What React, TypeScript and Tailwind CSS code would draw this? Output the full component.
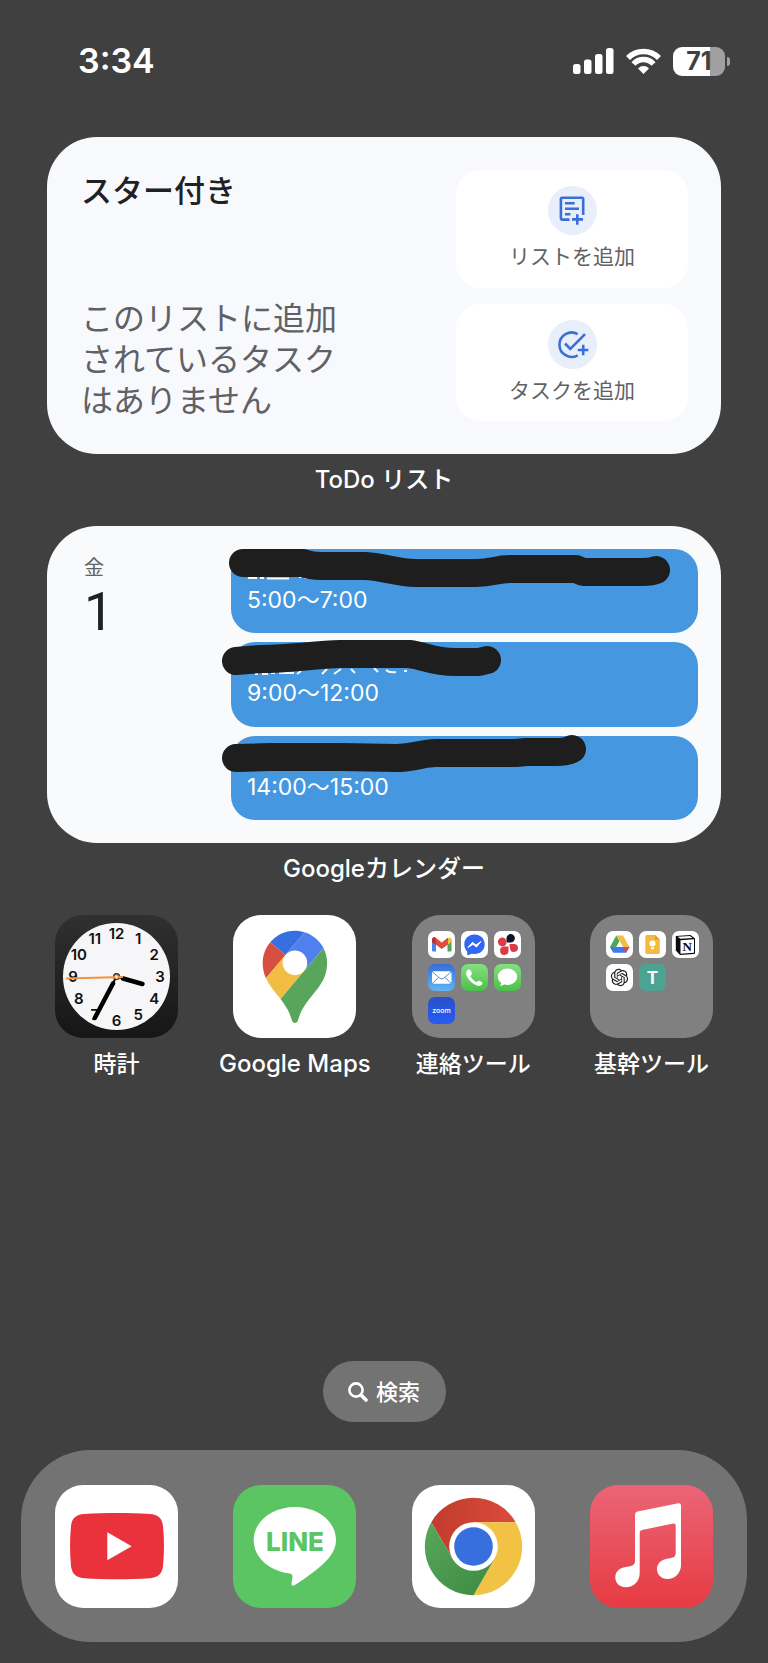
import { ReactNode } from "react";
import { RiOpenaiFill } from "react-icons/ri";

interface EventItem {
    time: string;
    stroke: string;
    marks: string;
}

const events: EventItem[] = [
    {
        time: "5:00～7:00",
        stroke: "M12 14 L72 14 Q80 17 90 17 L134 17 C155 18 165 24 185 24 L245 24 C262 24 265 20 280 20 L345 20 L352 23 L412 23 Q420 23 425 21",
        marks: "M17 29 h9 M29 29 h4 M36 29.5 h22 M68 28 h2 M73 28.5 h3",
    },
    {
        time: "9:00～12:00",
        stroke: "M5 19 L30 17 C60 17 80 13 110 12 L178 12 C195 14 200 20 225 20 L248 20 L256 18",
        marks: "M24 32 h3 M31 32 h6 M40 31 h4 M48 31 h15 M70 29 l-4 3 M96 27 l-5 5 M110 27 l-7 5 M120 27 l4 4 M143 26 l4 4 M155 28 q3 3 10 2 M173 29 h3",
    },
    {
        time: "14:00～15:00",
        stroke: "M5 22 L40 21 L110 21 L165 22 C185 22 190 17 205 17 L285 17 L295 16 L325 16 Q336 16 341 13",
        marks: "",
    },
];

const Clock = () => {
    const hours = [12, 1, 2, 3, 4, 5, 6, 7, 8, 9, 10, 11];
    return (
        <svg viewBox="0 0 123 123" className="size-full">
            <defs>
                <linearGradient id="clock-bg" x1="0" y1="0" x2="0" y2="1">
                    <stop offset="0" stopColor="#303030" />
                    <stop offset="1" stopColor="#161616" />
                </linearGradient>
            </defs>
            <rect width="123" height="123" fill="url(#clock-bg)" />
            <circle cx="61.5" cy="61.5" r="53.5" fill="#f6f6f9" />
            {hours.map((hour, i) => (
                <text
                    key={hour}
                    x={61.5 + 43.5 * Math.sin((i * Math.PI) / 6)}
                    y={67 - 43.5 * Math.cos((i * Math.PI) / 6)}
                    textAnchor="middle"
                    fontSize="15"
                    fontWeight="600"
                    fill="#111"
                >
                    {hour}
                </text>
            ))}
            <g stroke="#000" strokeLinecap="round">
                <path d="M61.5 61.5 L88 69" strokeWidth="2" />
                <path d="M68 63.5 L87.5 69" strokeWidth="4.5" />
                <path d="M61.5 61.5 L39.5 103.5" strokeWidth="2" />
                <path d="M58 68.5 L39.8 103" strokeWidth="4.5" />
            </g>
            <circle cx="61.5" cy="61.5" r="3.5" fill="#222" />
            <path d="M11 63.5 L68 62" stroke="#f0953a" strokeWidth="2" />
            <circle cx="61.5" cy="61.8" r="2.5" fill="#f0953a" />
            <circle cx="61.5" cy="61.8" r="1.2" fill="#f6f6f9" />
        </svg>
    );
};

const MapsPin = () => (
    <svg viewBox="0 0 123 123" className="size-full">
        <rect width="123" height="123" fill="#fff" />
        <g transform="translate(29.7 15.7) scale(0.697)">
            <path fill="#366fdf" d="M60.2 2.2C55.8.8 51 0 46.1 0 32 0 19.3 6.4 10.8 16.5l21.8 18.3L60.2 2.2z" />
            <path fill="#d74f3e" d="M10.8 16.5C4.1 24.5 0 34.9 0 46.1c0 8.7 1.7 15.7 4.6 22l28-33.3-21.8-18.3z" />
            <path fill="#4f80ee" d="M46.2 28.5c9.8 0 17.7 7.9 17.7 17.7 0 4.3-1.6 8.3-4.2 11.4 0 0 13.9-16.6 27.5-32.7-5.6-10.8-15.3-19-27-22.7L32.6 34.8c3.3-3.8 8.1-6.3 13.6-6.3" />
            <path fill="#f1bd42" d="M46.2 63.8c-9.8 0-17.7-7.9-17.7-17.7 0-4.3 1.5-8.3 4.1-11.3l-28 33.3c4.8 10.6 12.8 19.2 21 29.9l34.1-40.5c-3.3 3.9-8.1 6.3-13.5 6.3" />
            <path fill="#58a65c" d="M59.1 109.2c15.4-24.1 33.3-35 33.3-63 0-7.7-1.9-14.9-5.2-21.3L25.6 98c2.6 3.4 5.3 7.3 7.9 11.3 9.4 14.5 6.8 23.1 12.8 23.1s3.4-8.7 12.8-23.2" />
        </g>
    </svg>
);

const YouTube = () => (
    <svg viewBox="0 0 123 123" className="size-full">
        <rect width="123" height="123" fill="#fff" />
        <path fill="#ea323c" d="M29 29 C50 27.6 74 27.6 95 29 C103 29.5 107 33 108 41 C109.3 54 109.3 68 108 81 C107 89 103 92.5 95 93.2 C74 94.5 50 94.5 29 93.2 C21 92.5 17 89 16 81 C14.7 68 14.7 54 16 41 C17 33 21 29.5 29 29Z" />
        <path fill="#fff" d="M52.3 47.3 L76.7 61.2 L52.3 75.2Z" />
    </svg>
);

const Line = () => (
    <svg viewBox="0 0 123 123" className="size-full">
        <rect width="123" height="123" fill="#5bc463" />
        <path fill="#fff" d="M62 22 C85 22 103 36.5 103 55 C103 62 100 68 95 74 C87 83 70 95 61.5 100.3 Q58.2 101.5 58.5 98.5 L59.5 91.5 Q59.5 89 57 88.5 C36 85.5 20.7 72.5 20.7 55 C20.7 36.5 39 22 62 22Z" />
        <text x="62" y="66" textAnchor="middle" fontSize="26" fontWeight="800" fill="#5bc463">LINE</text>
    </svg>
);

const Chrome = () => (
    <svg viewBox="0 0 123 123" className="size-full">
        <defs>
            <linearGradient id="chrome-red" x1="0" y1="0" x2="1" y2="0">
                <stop offset="0" stopColor="#c13c2d" />
                <stop offset="1" stopColor="#db4b3b" />
            </linearGradient>
            <linearGradient id="chrome-green" x1="0" y1="0" x2="1" y2="1">
                <stop offset="0" stopColor="#57a75c" />
                <stop offset="1" stopColor="#3d8a40" />
            </linearGradient>
        </defs>
        <rect width="123" height="123" fill="#fff" />
        <path fill="url(#chrome-red)" d="M19.3 37.2 A48.7 48.7 0 0 1 103.7 37.2 L61.5 37.2 V61.5 L40.5 73.7Z" />
        <path fill="#f2c245" d="M103.7 37.2 A48.7 48.7 0 0 1 61.5 110.2 L82.5 73.7 L61.5 61.5 V37.2Z" />
        <path fill="url(#chrome-green)" d="M61.5 110.2 A48.7 48.7 0 0 1 19.3 37.2 L40.5 73.7 L61.5 61.5 L82.5 73.7Z" />
        <circle cx="61.5" cy="61.5" r="24.3" fill="#fff" />
        <circle cx="61.5" cy="61.5" r="19.3" fill="#386fde" />
    </svg>
);

const Music = () => (
    <svg viewBox="0 0 123 123" className="size-full">
        <defs>
            <linearGradient id="music-bg" x1="0" y1="0" x2="0" y2="1">
                <stop offset="0" stopColor="#eb6577" />
                <stop offset="1" stopColor="#e63b42" />
            </linearGradient>
        </defs>
        <rect width="123" height="123" fill="url(#music-bg)" />
        <path fill="#fff" d="M45 29.5 Q45 27 47.5 26.5 L88.5 18.3 Q91 18 91 20.5 V80 C91 88 85 94 77.5 94 C71 94 67 89.5 67 84 C67 78.5 71 75 76 74 L82 72.7 Q85.7 72 85.7 68 V40.5 Q85.7 38 83.2 38.5 L52 45 Q49.7 45.5 49.7 48 V88 C49.7 96.5 43.5 102.2 36 102.2 C29.5 102.2 25.3 98 25.3 92.5 C25.3 87 29 83.3 34.5 82.3 L41 81 Q45 80 45 76Z" />
    </svg>
);

const Mini: React.FC<{ className: string; children: ReactNode }> = ({ className, children }) => (
    <span className={`block size-[27px] overflow-hidden rounded-[7px] ${className}`}>
        {children}
    </span>
);

const ContactFolder = () => (
    <span className="grid size-full grid-cols-[repeat(3,27px)] content-start gap-[6px] bg-[#808080] p-4">
        <Mini className="bg-white">
            <svg viewBox="0 0 27 27">
                <path d="M4 8.5 L8 11.5 V20.5 H5 Q4 20.5 4 19.5Z" fill="#4f80ee" />
                <path d="M23.5 8.5 L19.5 11.5 V20.5 H22.5 Q23.5 20.5 23.5 19.5Z" fill="#4fa658" />
                <path d="M19.5 8 L21 6.5 Q23.5 6 23.5 9 V11 L19.5 14Z" fill="#f1bd42" />
                <path d="M4 11 V8.5 Q4.5 5.5 7.5 6.5 L13.7 11.5 L20 6.5 V13.5 L13.7 18 L8 13.8Z" fill="#dc4e3e" />
                <path d="M4 11 V8.5 Q4.5 5.5 7.5 6.5 L8 13.8Z" fill="#b8352c" />
            </svg>
        </Mini>
        <Mini className="bg-white">
            <svg viewBox="0 0 27 27">
                <path d="M13.5 3.5 C19.5 3.5 23.7 7.8 23.7 13.3 C23.7 19 19.5 23 13.5 23 L10.5 22.7 L7 24.2 Q6.2 24.3 6.2 23.5 V20.6 C4.3 18.8 3.3 16.3 3.3 13.3 C3.3 7.8 7.5 3.5 13.5 3.5Z" fill="#2f68f4" />
                <path d="M7 16.5 L11.5 11.3 L15 14 L20 10.5 L15.5 16 L12 13.3Z" fill="#fff" stroke="#fff" strokeLinejoin="round" />
            </svg>
        </Mini>
        <Mini className="bg-white">
            <svg viewBox="0 0 27 27">
                <path d="M12.5 7.5 A4.2 4.2 0 1 1 16.7 11.5 H12.5Z" fill="#0c1527" />
                <path d="M12.3 10.5 V13 A4.5 4.5 0 1 1 7.5 6.5 A4.5 4.5 0 0 1 12.3 10.5Z" fill="#db3b47" />
                <path d="M15.5 13 H20 A4 4 0 1 1 16 17.5Z" fill="#db3b47" />
                <path d="M14.5 15.5 V19.5 A4.2 4.2 0 1 1 10 15.5Z" fill="#db3b47" />
            </svg>
        </Mini>
        <Mini className="bg-linear-to-b from-[#376cd9] to-[#62b5f2]">
            <svg viewBox="0 0 27 27">
                <rect x="4" y="7.3" width="19.5" height="12.5" rx="2" fill="#fff" />
                <path d="M4.5 8 L12 14.3 Q13.7 15.5 15.5 14.3 L23 8 M4.5 19.3 L10.5 13.5 M23 19.3 L17 13.5" fill="none" stroke="#4a8fe0" />
            </svg>
        </Mini>
        <Mini className="bg-linear-to-b from-[#85e080] to-[#4bbf48]">
            <svg viewBox="0 0 27 27">
                <path d="M7.5 5.2 L9.3 6 Q11.2 9 10.8 10.2 L9.3 12.2 Q11.5 16 15.3 18.2 L17.3 16.7 Q18.7 16.3 21.3 18.5 Q21.8 19.5 21 20.5 Q18.8 22.8 15.5 21.3 Q8.5 18.5 5.5 11.5 Q4.2 7.5 7.5 5.2Z" fill="#fff" />
            </svg>
        </Mini>
        <Mini className="bg-linear-to-b from-[#85e080] to-[#4bbf48]">
            <svg viewBox="0 0 27 27">
                <ellipse cx="13.5" cy="12.8" rx="9.7" ry="8.2" fill="#fff" />
                <path d="M7 17 Q8 20 5.5 21.8 Q9 21.7 11.5 19.5Z" fill="#fff" />
            </svg>
        </Mini>
        <Mini className="bg-linear-to-b from-[#2850c8] to-[#275cf3]">
            <svg viewBox="0 0 27 27">
                <text x="13.5" y="15.5" textAnchor="middle" fontSize="7" fontWeight="500" fill="#fff">zoom</text>
            </svg>
        </Mini>
    </span>
);

const CoreFolder = () => (
    <span className="grid size-full grid-cols-[repeat(3,27px)] content-start gap-[6px] bg-[#808080] p-4">
        <Mini className="bg-white">
            <svg viewBox="0 0 27 27">
                <path d="M10.3 4.5 L13.5 10 L7.5 21.5 L4 16Z" fill="#4fa658" />
                <path d="M10.3 4.5 H17 L23.3 16 H17Z" fill="#f1bd42" />
                <path d="M7.5 16 H23.5 L20 21.8 H7.3 L4 16.2Z" fill="#4079e8" />
                <path d="M17.2 16 H23.5 L20 21.8Z" fill="#db4c3d" />
                <path d="M13.6 10.3 L17 16 H10.4Z" fill="#fff" />
            </svg>
        </Mini>
        <Mini className="bg-white">
            <svg viewBox="0 0 27 27">
                <path d="M8 4 H16 L20.8 8.5 V21.5 Q20.8 23 19.3 23 H8 Q6.3 23 6.3 21.5 V5.5 Q6.3 4 8 4Z" fill="#f2bb40" />
                <path d="M16 4 L20.8 8.5 H16Z" fill="#e0a030" />
                <circle cx="13.5" cy="12.5" r="3" fill="#fff" />
                <path d="M12 16.3 h3 v2 h-3Z" fill="#fff" />
            </svg>
        </Mini>
        <Mini className="bg-white">
            <svg viewBox="0 0 27 27">
                <path d="M3.8 5 L18.5 4 L23 7.5 V22 Q23 23 22 23 L8 24 L3.8 19.5Z" fill="#0b0b0b" />
                <path d="M5.5 5.8 L18 5 L20.5 7 L8.5 7.8Z" fill="#fff" />
                <path d="M8.5 9.2 L22 8.3 V21.8 L8.5 22.7Z" fill="#fff" />
                <text x="15.2" y="20" textAnchor="middle" fontSize="13" fontWeight="700" className="font-['Liberation_Serif',serif]" fill="#0b0b0b">N</text>
            </svg>
        </Mini>
        <Mini className="bg-white p-[3px]">
            <RiOpenaiFill size={21} color="#222" />
        </Mini>
        <Mini className="bg-[#4ba392]">
            <svg viewBox="0 0 27 27">
                <text x="13.5" y="20" textAnchor="middle" fontSize="17" fontWeight="700" fill="#fff">T</text>
            </svg>
        </Mini>
    </span>
);

interface AppIconProps {
    icon: ReactNode;
    name: string;
    labelClass?: string;
}

const AppIcon: React.FC<AppIconProps> = ({ icon, name, labelClass }) => (
    <button type="button" aria-label={name} className="flex w-[123px] flex-col items-center gap-3">
        <span className="block size-[123px] overflow-hidden rounded-[28px]">{icon}</span>
        {labelClass && (
            <span className={`whitespace-nowrap leading-7 font-medium text-white ${labelClass}`}>{name}</span>
        )}
    </button>
);

const apps = [
    { name: "時計", icon: <Clock />, labelClass: "text-[23px]" },
    { name: "Google Maps", icon: <MapsPin />, labelClass: "text-[24px]" },
    { name: "連絡ツール", icon: <ContactFolder />, labelClass: "text-[23px]" },
    { name: "基幹ツール", icon: <CoreFolder />, labelClass: "text-[23px]" },
];

const dock = [
    { name: "YouTube", icon: <YouTube /> },
    { name: "LINE", icon: <Line /> },
    { name: "Chrome", icon: <Chrome /> },
    { name: "Music", icon: <Music /> },
];

const StatusBar = () => (
    <header className="mt-11 flex h-[34px] items-center justify-between pr-[38px] pl-[78px] text-white">
        <time className="text-[34px] leading-[34px] font-semibold">3:34</time>
        <div className="flex items-center gap-3">
            <svg viewBox="0 0 41 26" className="h-[26px] w-[41px]" fill="#fff">
                <rect x="0" y="16" width="7.5" height="10" rx="2.5" />
                <rect x="11" y="11.5" width="7.5" height="14.5" rx="2.5" />
                <rect x="22" y="6" width="7.5" height="20" rx="2.5" />
                <rect x="33" y="0" width="7.5" height="26" rx="2.5" />
            </svg>
            <svg viewBox="0 0 35 26" className="h-[26px] w-[35px]" fill="none" stroke="#fff" strokeWidth="5.5">
                <path d="M2 10 A22 22 0 0 1 33 10" />
                <path d="M7.5 16 A13.5 13.5 0 0 1 27.5 16" />
                <path d="M12 20.5 A7.5 7.5 0 0 1 23 20.5 L17.5 26Z" fill="#fff" stroke="none" />
            </svg>
            <div className="flex items-center gap-[2px]">
                <span className="flex h-[29px] w-[52px] items-center justify-center rounded-[9px] bg-linear-to-r from-white from-71% to-[#a0a0a0] to-71% text-[25px] leading-none font-bold text-[#404040]">71</span>
                <span className="h-[9px] w-[3px] rounded-r-full bg-[#a0a0a0]" />
            </div>
        </div>
    </header>
);

interface ActionButtonProps {
    label: string;
    children: ReactNode;
}

const ActionButton: React.FC<ActionButtonProps> = ({ label, children }) => (
    <button
        type="button"
        className="flex h-[118px] w-[232px] flex-col items-center rounded-[24px] bg-white pt-4 text-[21px] leading-7 text-[#5f6165]"
    >
        <svg
            viewBox="0 0 49 49"
            className="mb-2 size-[49px] rounded-full bg-[#e8effb]"
            fill="none"
            stroke="#3b6fd8"
            strokeWidth="2.6"
        >
            {children}
        </svg>
        {label}
    </button>
);

const TodoWidget = () => (
    <section className="flex h-[317px] justify-between rounded-[50px] bg-[#f8f9fc] py-[33px] pr-[33px] pl-[34px]">
        <div className="flex flex-col justify-between">
            <h2 className="text-[31px] leading-[41px] font-medium text-[#202124]">スター付き</h2>
            <p className="w-[260px] text-[32px] leading-[41px] text-[#5f6165]">
                このリストに追加<br />されているタスク<br />はありません
            </p>
        </div>
        <div className="flex flex-col gap-4">
            <ActionButton label="リストを追加">
                <path d="M35.2 29 V13 Q35.2 11.7 34 11.7 H14 Q12.9 11.7 12.9 13 V32.5 Q12.9 33.6 14 33.6 H21.5" />
                <path d="M17 17.3 H26.7 M17 22.8 H31 M17 28.2 H22.5 M24 33.4 H35 M29.3 28.2 V38.8" />
            </ActionButton>
            <ActionButton label="タスクを追加">
                <path d="M29.7 14.1 A12.2 12.2 0 1 0 29.7 35.3" />
                <path d="M17 23.5 L22.3 29 L37 14.2 M29.8 30 H40.4 M35.2 24.7 V35.3" />
            </ActionButton>
        </div>
    </section>
);

const CalendarWidget = () => (
    <section className="flex h-[317px] rounded-[50px] bg-[#f8fafc] py-[23px] pr-[23px]">
        <div className="flex w-[184px] shrink-0 flex-col items-start pt-1 pl-[37px]">
            <span className="text-[20px] leading-[30px] text-[#5f6165]">金</span>
            <span className="font-['Roboto',sans-serif] text-[53px] leading-[58px] text-[#202124]">1</span>
        </div>
        <ul className="flex flex-1 flex-col gap-[9px]">
            {events.map((event) => (
                <li key={event.time} className="relative h-[85px] rounded-[24px] bg-[#4597e0] pt-9 pl-4">
                    <time className="text-[23px] leading-[30px] text-white">{event.time}</time>
                    {/* marker stroke over the event title */}
                    <svg viewBox="0 0 467 85" className="absolute top-0 left-0 h-[85px] w-[467px] overflow-visible" fill="none">
                        <path d={event.marks} stroke="#f4f8fc" strokeWidth="2" />
                        <path d={event.stroke} stroke="#1e1e1e" strokeWidth="28" strokeLinecap="round" strokeLinejoin="round" />
                    </svg>
                </li>
            ))}
        </ul>
    </section>
);

export default function App() {
    return (
        <div className="flex min-h-screen flex-col bg-[#404040] pb-[21px] font-['Inter','Noto_Sans_CJK_JP',sans-serif]">
            <StatusBar />
            <main className="mt-[59px] px-[47px]">
                <TodoWidget />
                <p className="mt-3 mb-8 text-center text-[24px] leading-7 font-medium text-white">ToDo リスト</p>
                <CalendarWidget />
                <p className="mt-3 mb-8 text-center text-[24px] leading-7 font-medium text-white">Googleカレンダー</p>
                <div className="flex justify-between px-2">
                    {apps.map((app) => (
                        <AppIcon key={app.name} {...app} />
                    ))}
                </div>
            </main>
            <button
                type="button"
                className="mx-auto mt-auto flex h-[61px] w-[123px] items-center justify-center gap-2 rounded-full bg-[#737373] text-[22px] leading-7 font-medium text-white"
            >
                <svg viewBox="0 0 20 20" className="size-5" fill="none" stroke="#fff" strokeLinecap="round">
                    <circle cx="8" cy="8" r="6.6" strokeWidth="2.6" />
                    <path d="M13 13 L18 18" strokeWidth="3.6" />
                </svg>
                検索
            </button>
            <nav className="mx-[21px] mt-7 flex justify-between rounded-[70px] bg-[#737373] px-[34px] pt-[35px] pb-[34px]">
                {dock.map((app) => (
                    <AppIcon key={app.name} {...app} />
                ))}
            </nav>
        </div>
    );
}
